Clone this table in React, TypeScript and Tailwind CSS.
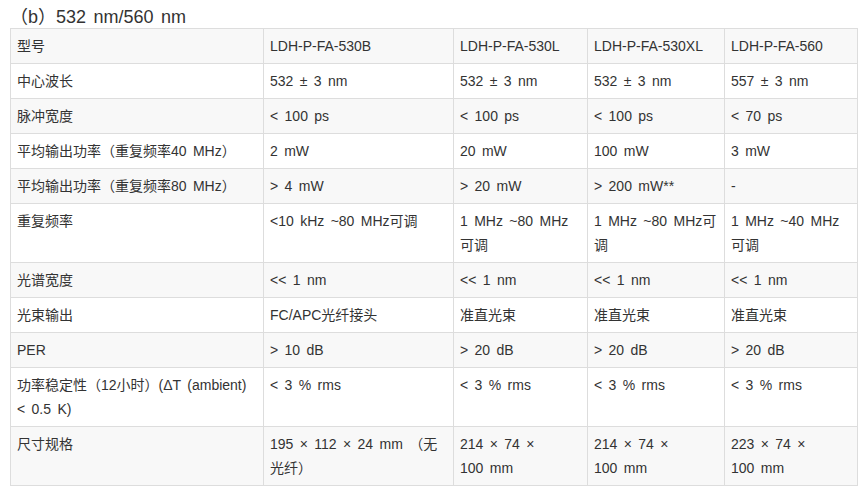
import React from "react";

type Cell = React.ReactNode;

const nw = (t: string) => <span className="whitespace-nowrap">{t}</span>;

const rows: Cell[][] = [
  ["型号", "LDH-P-FA-530B", "LDH-P-FA-530L", "LDH-P-FA-530XL", "LDH-P-FA-560"],
  ["中心波长", "532 ± 3 nm", "532 ± 3 nm", "532 ± 3 nm", "557 ± 3 nm"],
  ["脉冲宽度", "< 100 ps", "< 100 ps", "< 100 ps", "< 70 ps"],
  ["平均输出功率（重复频率40 MHz）", "2 mW", "20 mW", "100 mW", "3 mW"],
  ["平均输出功率（重复频率80 MHz）", "> 4 mW", "> 20 mW", "> 200 mW**", "-"],
  [
    "重复频率",
    "<10 kHz ~80 MHz可调",
    <>1 MHz ~80 MHz{nw("可调")}</>,
    "1 MHz ~80 MHz可调",
    <>1 MHz ~40 MHz{nw("可调")}</>,
  ],
  ["光谱宽度", "<< 1 nm", "<< 1 nm", "<< 1 nm", "<< 1 nm"],
  ["光束输出", "FC/APC光纤接头", "准直光束", "准直光束", "准直光束"],
  ["PER", "> 10 dB", "> 20 dB", "> 20 dB", "> 20 dB"],
  ["功率稳定性（12小时）(ΔT (ambient) < 0.5 K)", "< 3 % rms", "< 3 % rms", "< 3 % rms", "< 3 % rms"],
  [
    "尺寸规格",
    "195 × 112 × 24 mm （无光纤）",
    "214 × 74 × 100\u00a0mm",
    "214 × 74 × 100\u00a0mm",
    "223 × 74 × 100\u00a0mm",
  ],
];

export default function App() {
  return (
    <div
      className="w-[868px] h-[497px] bg-white text-[#333333] pl-[10px] pt-[6px] [word-spacing:2.5px]"
      style={{ fontFamily: '"Liberation Sans", "Noto Sans CJK SC", sans-serif' }}
    >
      <div className="text-[18px] leading-[22px] h-[22px] text-[#333333]">（b）532 nm/560 nm</div>
      <table className="table-fixed border-collapse w-[847px] text-[14px] leading-[24px]">
        <colgroup>
          <col className="w-[253px]" />
          <col className="w-[190px]" />
          <col className="w-[134px]" />
          <col className="w-[137px]" />
          <col className="w-[133px]" />
        </colgroup>
        <tbody>
          {rows.map((r, i) => (
            <tr key={i} className={i % 2 === 0 ? "bg-[#f8f8f8]" : "bg-white"}>
              {r.map((c, j) => (
                <td
                  key={j}
                  className="border border-[#dddddd] align-top px-[6px] pt-[5px] pb-[5px] break-words"
                >
                  {c}
                </td>
              ))}
            </tr>
          ))}
        </tbody>
      </table>
    </div>
  );
}
